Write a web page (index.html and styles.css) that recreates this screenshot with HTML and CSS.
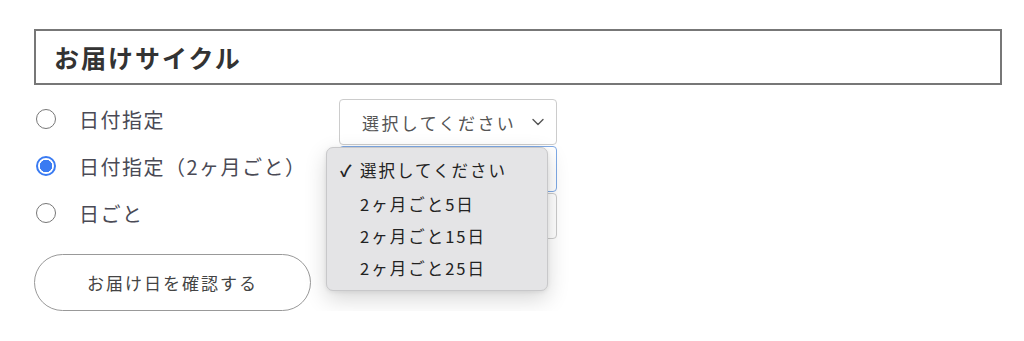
FILE: index.html
```html
<!DOCTYPE html>
<html lang="ja">
<head>
<meta charset="utf-8">
<link rel="stylesheet" href="styles.css">
</head>
<body>
<div class="page">
  <h2 class="title">お届けサイクル</h2>
  <div class="options">
    <div class="row">
      <label class="choice"><span class="radio"></span><span class="choice-text">日付指定</span></label>
      <div class="select"><span class="select-text">選択してください</span><svg class="chev" viewBox="0 0 12 8" width="12" height="8"><path d="M1 1.5 L6 6.5 L11 1.5" fill="none" stroke="#555" stroke-width="1.4" stroke-linecap="round" stroke-linejoin="round"/></svg></div>
    </div>
    <div class="row">
      <label class="choice"><span class="radio checked"></span><span class="choice-text">日付指定（2ヶ月ごと）</span></label>
      <div class="select-wrap">
        <div class="select focused"><span class="select-text">選択してください</span><svg class="chev" viewBox="0 0 12 8" width="12" height="8"><path d="M1 1.5 L6 6.5 L11 1.5" fill="none" stroke="#555" stroke-width="1.4" stroke-linecap="round" stroke-linejoin="round"/></svg></div>
        <ul class="menu">
          <li class="item first"><span class="check">✓</span>選択してください</li>
          <li class="item"><span class="check"></span>2ヶ月ごと5日</li>
          <li class="item"><span class="check"></span>2ヶ月ごと15日</li>
          <li class="item"><span class="check"></span>2ヶ月ごと25日</li>
        </ul>
      </div>
    </div>
    <div class="row">
      <label class="choice"><span class="radio"></span><span class="choice-text">日ごと</span></label>
      <div class="select"><span class="select-text">選択してください</span><svg class="chev" viewBox="0 0 12 8" width="12" height="8"><path d="M1 1.5 L6 6.5 L11 1.5" fill="none" stroke="#555" stroke-width="1.4" stroke-linecap="round" stroke-linejoin="round"/></svg></div>
    </div>
  </div>
  <button class="confirm">お届け日を確認する</button>
</div>
</body>
</html>
```
FILE: styles.css
```css
* { box-sizing: border-box; }
html, body { margin: 0; padding: 0; background: #fff; }
body {
  font-family: "Noto Sans CJK JP", "Noto Sans", sans-serif;
  color: #444;
}
.page {
  padding: 29px 22px 0 34px;
}
.title {
  margin: 0;
  width: 968px;
  height: 56px;
  border: 2px solid #777;
  display: flex;
  align-items: center;
  padding-left: 18px;
  font-size: 25px;
  font-weight: 700;
  letter-spacing: 2px;
  color: #333;
}
.options {
  margin-top: 14px;
  display: flex;
  flex-direction: column;
  gap: 1px;
}
.row {
  display: grid;
  grid-template-columns: 305px 218px;
  height: 46px;
  align-items: center;
}
.choice {
  display: flex;
  align-items: center;
  padding-left: 2px;
  padding-bottom: 6px;
}
.radio {
  width: 20px;
  height: 20px;
  border-radius: 50%;
  border: 1.5px solid #777;
  background: #fff;
  flex: none;
}
.radio.checked {
  border: 2px solid #3a7bf2;
  background: radial-gradient(circle, #3a7bf2 0 6px, #fff 6.5px);
}
.choice-text {
  margin-left: 23px;
  font-size: 20px;
  letter-spacing: 1.5px;
  color: #4a4a55;
}
.select-wrap {
  position: relative;
  height: 46px;
}
.select {
  height: 46px;
  border: 1px solid #ccc;
  border-radius: 4px;
  background: #fff;
  display: flex;
  align-items: center;
  padding: 0 12px 0 22px;
  justify-content: space-between;
}
.select.focused {
  border: 1.5px solid #7faae6;
}
.select-text {
  font-size: 17px;
  letter-spacing: 2.4px;
  color: #555;
}
.chev { flex: none; }
.menu {
  position: absolute;
  left: -13px;
  top: 1px;
  width: 222px;
  margin: 0;
  padding: 6px 0;
  list-style: none;
  background: #e4e4e6;
  border: 1px solid #c8c8ca;
  border-radius: 7px;
  box-shadow: 0 8px 22px rgba(0, 0, 0, 0.16), 0 1px 4px rgba(0, 0, 0, 0.08);
  z-index: 2;
}
.item {
  height: 32px;
  display: flex;
  align-items: center;
  font-size: 16.5px;
  letter-spacing: 2px;
  color: #222;
  padding-left: 13px;
}
.item.first { margin-bottom: 2px; }
.check {
  width: 20px;
  font-size: 16px;
  font-weight: 700;
  letter-spacing: 0;
}
.confirm {
  margin-top: 15px;
  width: 277px;
  height: 57px;
  border: 1.5px solid #999;
  border-radius: 29px;
  background: #fff;
  font-family: "Noto Sans CJK JP", "Noto Sans", sans-serif;
  font-size: 17px;
  letter-spacing: 2px;
  color: #444;
  padding: 0;
}
```
